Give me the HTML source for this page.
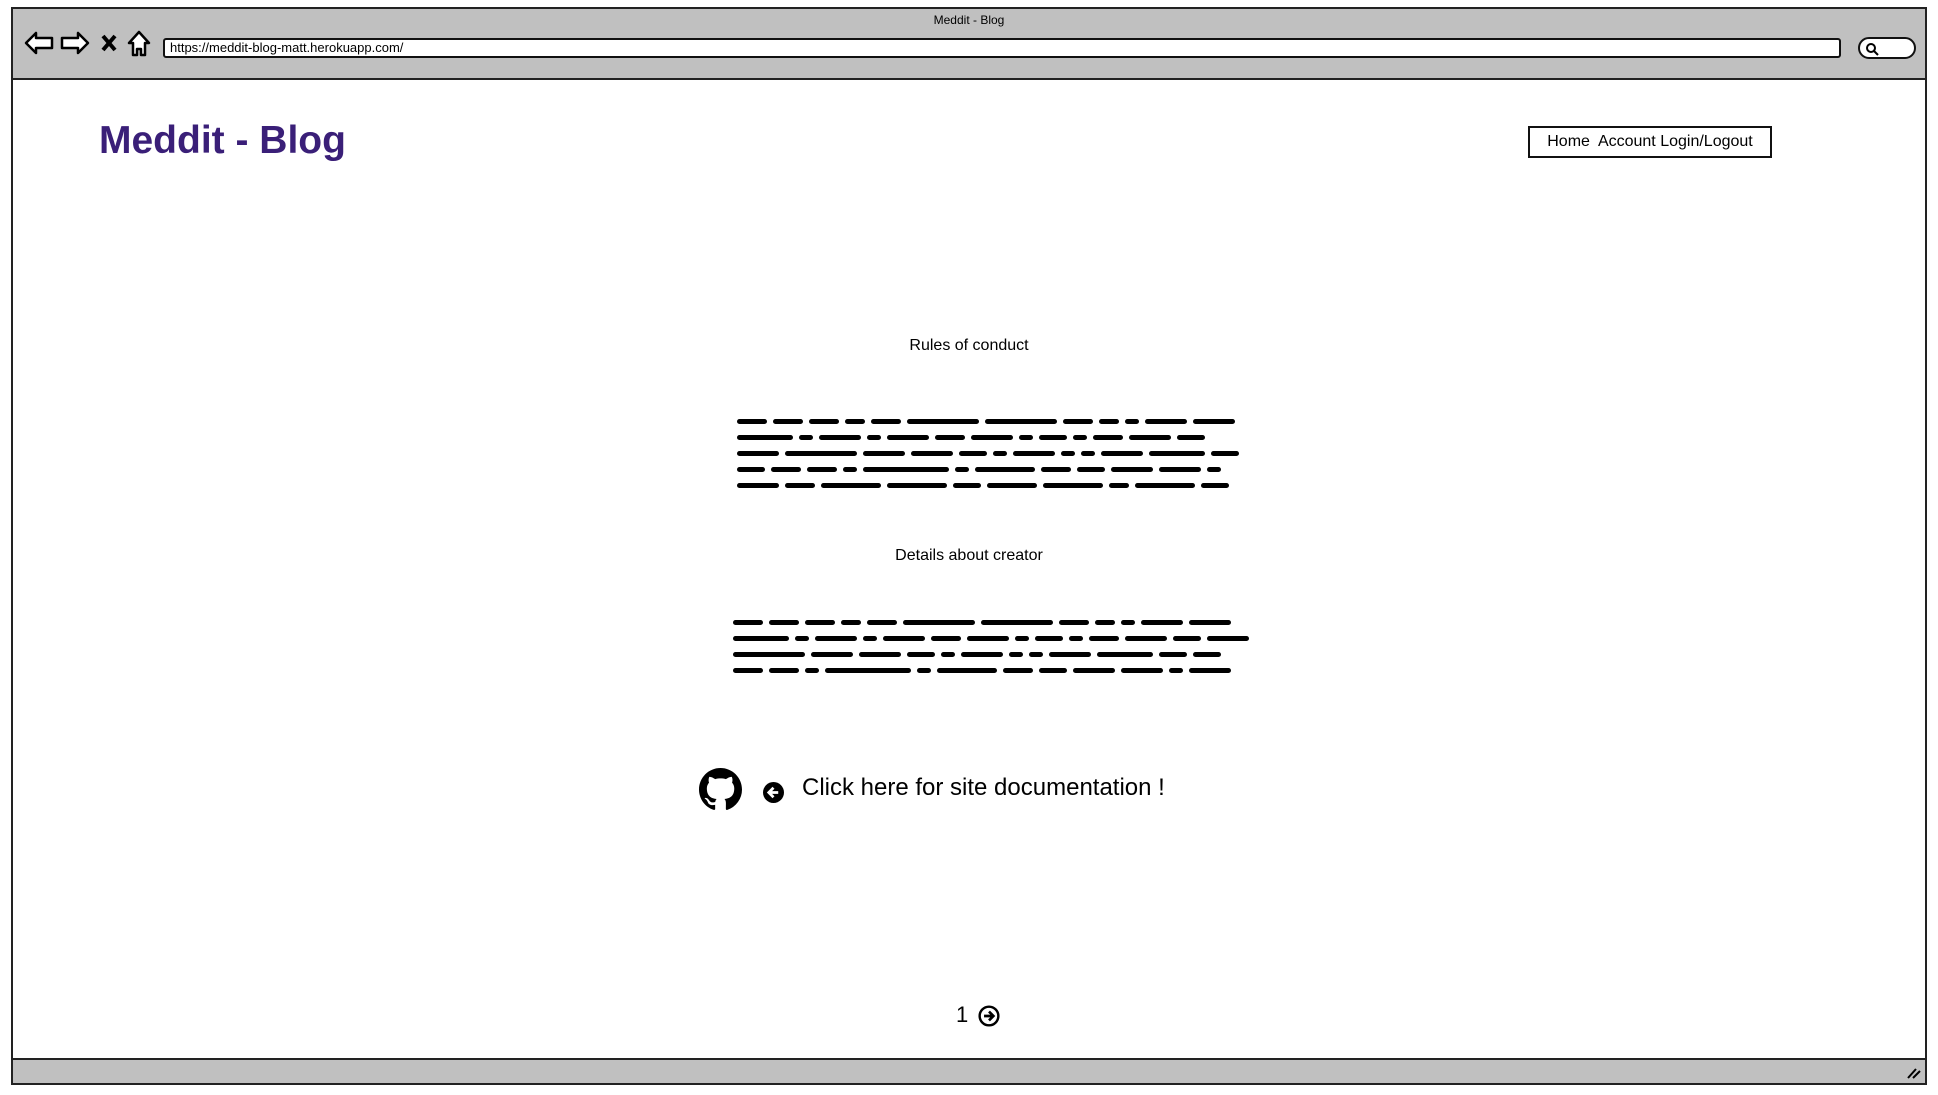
<!DOCTYPE html>
<html><head><meta charset="utf-8"><style>
*{margin:0;padding:0;box-sizing:border-box}
body{width:1938px;height:1095px;background:#fff;position:relative;overflow:hidden;font-family:"Liberation Sans",sans-serif;color:#000}
.abs{position:absolute}
.frame{left:11px;top:7px;width:1916px;height:1078px;border:2px solid #222;}
.top{left:11px;top:7px;width:1916px;height:73px;background:#c0c0c0;border:2px solid #222;}
.bot{left:11px;top:1058px;width:1916px;height:27px;background:#c0c0c0;border:2px solid #222;}
.url{left:163px;top:38px;width:1678px;height:20px;background:#fff;border:2px solid #111;border-radius:3px;font-size:13px;line-height:16px;padding-left:5px}
.search{left:1858px;top:37px;width:58px;height:22px;background:#fff;border:2px solid #111;border-radius:11px}
.c{text-align:center}
.lines div{height:16px;display:flex;gap:6px;align-items:center}
.lines span{display:inline-block;height:5px;background:#000;border-radius:3px}
</style></head><body>
<div class="abs frame"></div>
<div class="abs top"></div>
<div class="abs" style="left:0;width:1938px;top:13px;font-size:12px" ><div class="c">Meddit - Blog</div></div>
<svg class="abs" style="left:22px;top:28px" width="135" height="32" viewBox="0 0 135 32">
<path d="M4 15 L14 5 L14 10 L30 10 L30 20 L14 20 L14 25 Z" fill="#fff" stroke="#000" stroke-width="2.5" stroke-linejoin="round"/>
<path d="M66 15 L56 5 L56 10 L40 10 L40 20 L56 20 L56 25 Z" fill="#fff" stroke="#000" stroke-width="2.5" stroke-linejoin="round"/>
<path d="M81 8 L93 22 M93 8 L81 22" stroke="#000" stroke-width="4"/>
<path d="M117 4 L127 15 L123 15 L123 27 L119 27 L119 21 L115 21 L115 27 L111 27 L111 15 L107 15 Z" fill="#fff" stroke="#000" stroke-width="2.5" stroke-linejoin="round"/>
</svg>
<div class="abs url">https://meddit-blog-matt.herokuapp.com/</div>
<div class="abs search"><svg width="14" height="14" style="margin:3px 0 0 5px"><circle cx="6" cy="6" r="4" fill="none" stroke="#000" stroke-width="2"/><path d="M9 9 L13 13" stroke="#000" stroke-width="2"/></svg></div>
<div class="abs" style="left:99px;top:119px;font-size:39px;font-weight:bold;color:#3a1f78">Meddit - Blog</div>
<div class="abs" style="left:1528px;top:126px;width:244px;height:32px;border:2px solid #111;font-size:16px;line-height:28px;text-align:center">Home&nbsp; Account Login/Logout</div>
<div class="abs" style="left:0;width:1938px;top:337px;font-size:16px"><div class="c">Rules of conduct</div></div>
<div class="abs lines" style="left:737px;top:413px">
<div><span style="width:30px"></span><span style="width:30px"></span><span style="width:30px"></span><span style="width:20px"></span><span style="width:30px"></span><span style="width:72px"></span><span style="width:72px"></span><span style="width:30px"></span><span style="width:20px"></span><span style="width:14px"></span><span style="width:42px"></span><span style="width:42px"></span></div>
<div><span style="width:56px"></span><span style="width:14px"></span><span style="width:42px"></span><span style="width:14px"></span><span style="width:42px"></span><span style="width:30px"></span><span style="width:42px"></span><span style="width:14px"></span><span style="width:28px"></span><span style="width:14px"></span><span style="width:30px"></span><span style="width:42px"></span><span style="width:28px"></span></div>
<div><span style="width:42px"></span><span style="width:72px"></span><span style="width:42px"></span><span style="width:42px"></span><span style="width:28px"></span><span style="width:14px"></span><span style="width:42px"></span><span style="width:14px"></span><span style="width:14px"></span><span style="width:42px"></span><span style="width:56px"></span><span style="width:28px"></span></div>
<div><span style="width:28px"></span><span style="width:30px"></span><span style="width:30px"></span><span style="width:14px"></span><span style="width:86px"></span><span style="width:14px"></span><span style="width:60px"></span><span style="width:30px"></span><span style="width:28px"></span><span style="width:42px"></span><span style="width:42px"></span><span style="width:14px"></span></div>
<div><span style="width:42px"></span><span style="width:30px"></span><span style="width:60px"></span><span style="width:60px"></span><span style="width:28px"></span><span style="width:50px"></span><span style="width:60px"></span><span style="width:20px"></span><span style="width:60px"></span><span style="width:28px"></span></div>
</div>
<div class="abs" style="left:0;width:1938px;top:547px;font-size:16px"><div class="c">Details about creator</div></div>
<div class="abs lines" style="left:733px;top:614px">
<div><span style="width:30px"></span><span style="width:30px"></span><span style="width:30px"></span><span style="width:20px"></span><span style="width:30px"></span><span style="width:72px"></span><span style="width:72px"></span><span style="width:30px"></span><span style="width:20px"></span><span style="width:14px"></span><span style="width:42px"></span><span style="width:42px"></span></div>
<div><span style="width:56px"></span><span style="width:14px"></span><span style="width:42px"></span><span style="width:14px"></span><span style="width:42px"></span><span style="width:30px"></span><span style="width:42px"></span><span style="width:14px"></span><span style="width:28px"></span><span style="width:14px"></span><span style="width:30px"></span><span style="width:42px"></span><span style="width:28px"></span><span style="width:42px"></span></div>
<div><span style="width:72px"></span><span style="width:42px"></span><span style="width:42px"></span><span style="width:28px"></span><span style="width:14px"></span><span style="width:42px"></span><span style="width:14px"></span><span style="width:14px"></span><span style="width:42px"></span><span style="width:56px"></span><span style="width:28px"></span><span style="width:28px"></span></div>
<div><span style="width:30px"></span><span style="width:30px"></span><span style="width:14px"></span><span style="width:86px"></span><span style="width:14px"></span><span style="width:60px"></span><span style="width:30px"></span><span style="width:28px"></span><span style="width:42px"></span><span style="width:42px"></span><span style="width:14px"></span><span style="width:42px"></span></div>
</div>
<svg class="abs" style="left:699px;top:768px" width="43" height="43" viewBox="0 0 16 16"><path fill="#000" d="M8 0C3.58 0 0 3.58 0 8c0 3.54 2.290 6.530 5.470 7.590.4.07.55-.17.55-.38 0-.19-.01-.82-.01-1.49-2.01.37-2.53-.49-2.69-.94-.09-.23-.48-.94-.82-1.130-.28-.15-.68-.52-.01-.53.63-.01 1.080.58 1.230.82.72 1.210 1.870.87 2.330.66.07-.52.28-.87.51-1.07-1.780-.2-3.640-.89-3.640-3.950 0-.87.31-1.590.82-2.150-.08-.2-.36-1.020.08-2.120 0 0 .67-.21 2.200.82.64-.18 1.320-.27 2-.27.68 0 1.360.09 2 .27 1.530-1.040 2.200-.82 2.200-.82.44 1.100.16 1.920.08 2.120.51.56.82 1.270.82 2.150 0 3.070-1.870 3.750-3.650 3.950.29.25.54.73.54 1.480 0 1.070-.01 1.930-.01 2.200 0 .21.15.46.55.38A8.013 8.013 0 0016 8c0-4.420-3.580-8-8-8z"/></svg>
<svg class="abs" style="left:763px;top:782px" width="21" height="21" viewBox="0 0 20 20"><circle cx="10" cy="10" r="10" fill="#000"/><path d="M14.5 10H6 M10 5.5 L5.5 10 L10 14.5" stroke="#fff" stroke-width="2.6" fill="none"/></svg>
<div class="abs" style="left:802px;top:774px;font-size:24px">Click here for site documentation !</div>
<div class="abs" style="left:956px;top:1002px;font-size:22px">1</div>
<svg class="abs" style="left:978px;top:1005px" width="22" height="22" viewBox="0 0 20 20"><circle cx="10" cy="10" r="8.5" fill="#fff" stroke="#000" stroke-width="2.2"/><path d="M5.5 10H14 M10 6 L14 10 L10 14" stroke="#000" stroke-width="2.4" fill="none"/></svg>
<div class="abs bot"></div>
<svg class="abs" style="left:1906px;top:1066px" width="16" height="14"><path d="M2 12 L10 3 M7 12 L14 5" stroke="#000" stroke-width="2"/></svg>
</body></html>
